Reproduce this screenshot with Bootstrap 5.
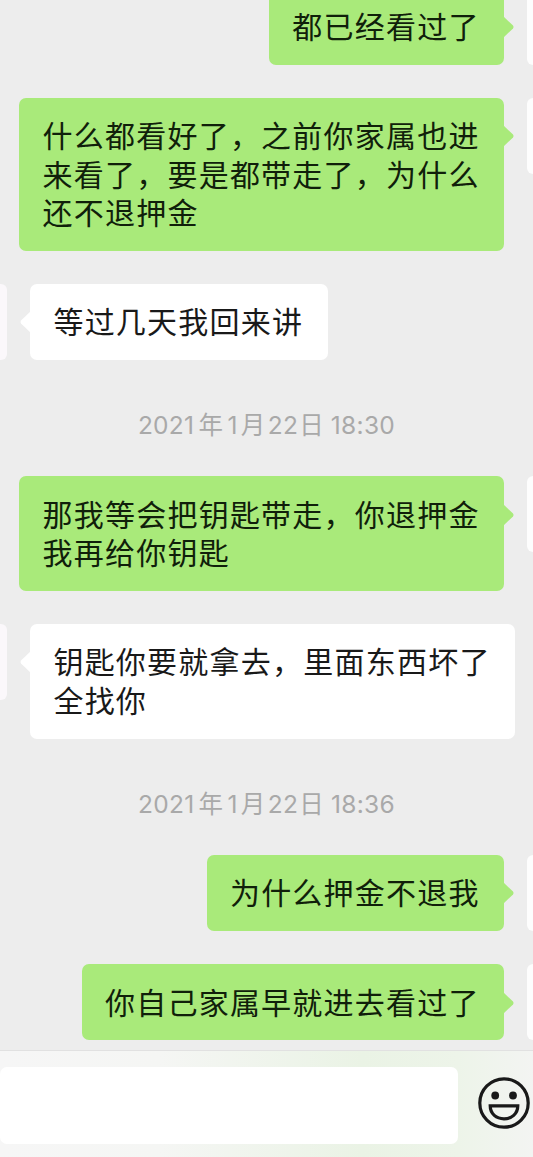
<!DOCTYPE html>
<html lang="zh-CN">
<head>
<meta charset="utf-8">
<meta name="viewport" content="width=device-width, initial-scale=1">
<title>聊天</title>
<link href="https://cdn.jsdelivr.net/npm/bootstrap@5.3.0/dist/css/bootstrap.min.css" rel="stylesheet">
<style>
  body { background: #ededed; font-family: Inter, "Liberation Sans", "Noto Sans CJK SC", sans-serif; }
  .screen { width: 533px; height: 1157px; }
  .chat { height: 1050px; gap: 33px; }
  .bubble { position: relative; padding: 20.5px 24.2px 17.6px 23.4px; border-radius: 7px; font: 30px/38.3px "Liberation Sans", "Noto Sans CJK SC", sans-serif; letter-spacing: 1.24px; color: #191919; white-space: nowrap; }
  .sent { background: #a9ea7a; color: #10200a; }
  .received { background: #fff; }
  .tip { position: absolute; top: 27.5px; width: 11px; height: 22px; }
  .sent .tip { left: calc(100% - 1px); fill: #a9ea7a; }
  .received .tip { right: calc(100% - 1px); fill: #fff; }
  .avatar { flex: none; width: 76px; height: 76px; border-radius: 6px; background: #fdfdfd; }
  .row-sent { margin-right: -70.2px; gap: 23.2px; }
  .row-first { margin-top: -11.5px; }
  .row-received { margin-left: -69.5px; gap: 23.5px; }
  .row-received .avatar { background: #fbf8fb; }
  .stamp { height: 50px; line-height: 64px; font-size: 24.5px; color: #a9a9a9; letter-spacing: .3px; }
  .stamp b { font: 24.5px/30px "Liberation Sans", "Noto Sans CJK SC", sans-serif; letter-spacing: 0; margin: 0 4.5px 0 4px; }
  .stamp .month { margin: 0 2.5px 0 3px; }
  .stamp .day { margin: 0 0 0 1px; }
  .composer { height: 107px; border-top: 1px solid #e1e1e1; background: linear-gradient(90deg, #f6f6f6 0, #f5f6f4 30%, #eaf3e5 68%, #edf4e9 86%, #f3f4f2 100%); }
  .entry { width: 458px; height: 77px; margin-top: 15.5px; border-radius: 7px; background: #fff; }
  .smile { width: 52px; height: 52px; margin: 26px 0 0 20px; }
</style>
</head>
<body>
<div class="screen overflow-hidden d-flex flex-column">
  <main class="chat d-flex flex-column overflow-hidden flex-shrink-0">
    <div class="row-sent row-first d-flex justify-content-end">
      <div class="bubble sent">都已经看过了<svg class="tip" viewBox="0 0 11 22"><path d="M0 0 10 9.5Q11 11 10 12.5L0 22Z"/></svg></div><div class="avatar"></div>
    </div>
    <div class="row-sent d-flex justify-content-end">
      <div class="bubble sent">什么都看好了，之前你家属也进<br>来看了，要是都带走了，为什么<br>还不退押金<svg class="tip" viewBox="0 0 11 22"><path d="M0 0 10 9.5Q11 11 10 12.5L0 22Z"/></svg></div><div class="avatar"></div>
    </div>
    <div class="row-received d-flex">
      <div class="avatar"></div><div class="bubble received">等过几天我回来讲<svg class="tip" viewBox="0 0 11 22"><path d="M11 0 1 9.5Q0 11 1 12.5L11 22Z"/></svg></div>
    </div>
    <div class="stamp text-center">2021<b>年</b>1<b class="month">月</b>22<b class="day">日</b> 18:30</div>
    <div class="row-sent d-flex justify-content-end">
      <div class="bubble sent">那我等会把钥匙带走，你退押金<br>我再给你钥匙<svg class="tip" viewBox="0 0 11 22"><path d="M0 0 10 9.5Q11 11 10 12.5L0 22Z"/></svg></div><div class="avatar"></div>
    </div>
    <div class="row-received d-flex">
      <div class="avatar"></div><div class="bubble received">钥匙你要就拿去，里面东西坏了<br>全找你<svg class="tip" viewBox="0 0 11 22"><path d="M11 0 1 9.5Q0 11 1 12.5L11 22Z"/></svg></div>
    </div>
    <div class="stamp text-center">2021<b>年</b>1<b class="month">月</b>22<b class="day">日</b> 18:36</div>
    <div class="row-sent d-flex justify-content-end">
      <div class="bubble sent">为什么押金不退我<svg class="tip" viewBox="0 0 11 22"><path d="M0 0 10 9.5Q11 11 10 12.5L0 22Z"/></svg></div><div class="avatar"></div>
    </div>
    <div class="row-sent d-flex justify-content-end">
      <div class="bubble sent">你自己家属早就进去看过了<svg class="tip" viewBox="0 0 11 22"><path d="M0 0 10 9.5Q11 11 10 12.5L0 22Z"/></svg></div><div class="avatar"></div>
    </div>
  </main>
  <footer class="composer d-flex align-items-start flex-shrink-0">
    <div class="entry flex-shrink-0"></div>
    <svg class="smile flex-shrink-0" viewBox="0 0 52 52" fill="none" stroke="#191919" stroke-width="3.2">
      <circle cx="26" cy="26" r="24.2"/>
      <circle cx="17.2" cy="18.5" r="3.9" fill="#191919" stroke="none"/>
      <circle cx="35" cy="18.5" r="3.9" fill="#191919" stroke="none"/>
      <path d="M12.2 28.8H39.8C39.8 37 33.5 41.8 26 41.8S12.2 37 12.2 28.8Z"/>
    </svg>
  </footer>
</div>
<script src="https://cdn.jsdelivr.net/npm/bootstrap@5.3.0/dist/js/bootstrap.bundle.min.js"></script>
</body>
</html>
